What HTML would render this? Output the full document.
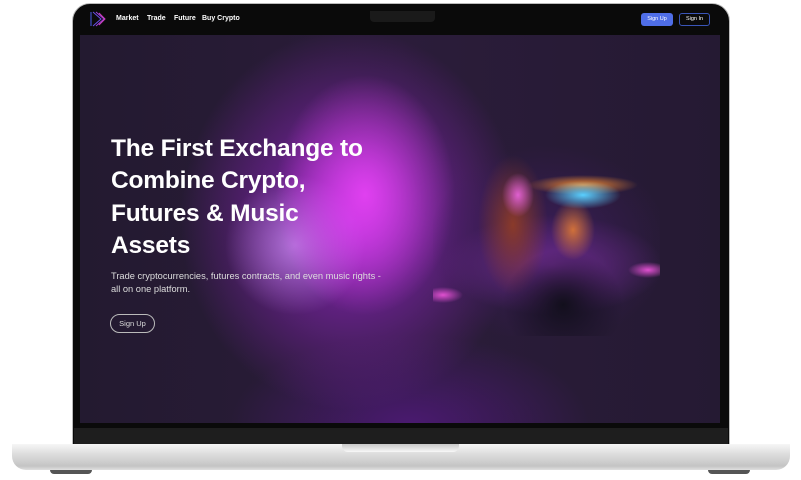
<!DOCTYPE html>
<html><head><style>
*{margin:0;padding:0;box-sizing:border-box}
body{width:801px;height:480px;background:#fff;position:relative;overflow:hidden;font-family:"Liberation Sans",sans-serif}
.frame{position:absolute;left:72px;top:3px;width:658px;height:442px;background:#0a0a0a;border-radius:18px 18px 0 0;border:1px solid #bbb}
.screen{position:absolute;left:80px;top:35px;width:640px;height:388px;overflow:hidden;
background:radial-gradient(ellipse 90px 120px at 285px 160px,#e040f0 0%,rgba(200,60,230,.0) 100%),
radial-gradient(ellipse 70px 70px at 215px 210px,rgba(200,140,240,.75) 0%,rgba(180,100,230,0) 100%),
radial-gradient(ellipse 170px 190px at 270px 185px,#a52ed0 0%,rgba(120,35,160,.7) 45%,rgba(40,25,55,0) 100%),
radial-gradient(ellipse 180px 90px at 330px 390px,#4a1a70 0%,rgba(40,25,55,0) 100%),
linear-gradient(90deg,#231a30,#2b1c3a 50%,#251a33);}
.nav{position:absolute;top:10px;left:80px;width:640px;height:20px;color:#fff;font-size:7px;font-weight:bold}
.nav span{position:absolute;top:5px}
.btn1{position:absolute;left:561px;top:3px;width:32px;height:13px;background:#4f6ee8;border-radius:3px;font-size:5.5px;text-align:center;line-height:13px;font-weight:normal}
.btn2{position:absolute;left:599px;top:3px;width:31px;height:13px;border:1px solid #3a55b8;border-radius:3px;font-size:5.5px;text-align:center;line-height:11px;font-weight:normal}
.cam{position:absolute;left:370px;top:11px;width:65px;height:11px;background:#1a1a1a;border-radius:0 0 4px 4px}
h1{position:absolute;left:31px;top:98px;color:#fff;font-size:24.5px;line-height:32.3px;font-weight:bold;width:262px;letter-spacing:-.2px}
p{position:absolute;left:31px;top:235px;color:#ddd;font-size:9.3px;line-height:13px;width:278px}
.su{position:absolute;left:30px;top:279px;width:45px;height:19px;border:1px solid #bbb;border-radius:10px;color:#ddd;font-size:7.5px;text-align:center;line-height:17px}
.art{position:absolute;left:353px;top:100px;width:227px;height:201px;background:
radial-gradient(ellipse 38px 14px at 150px 60px,#5ad0ff,rgba(0,0,0,0) 100%),
radial-gradient(ellipse 55px 10px at 150px 50px,#f08a30,rgba(0,0,0,0) 100%),
radial-gradient(ellipse 22px 30px at 140px 95px,#d0703a,rgba(0,0,0,0) 100%),
radial-gradient(ellipse 16px 22px at 85px 60px,#e060d0,rgba(0,0,0,0) 100%),
radial-gradient(ellipse 60px 55px at 130px 170px,#120f1c,rgba(0,0,0,0) 100%),
radial-gradient(ellipse 35px 70px at 80px 90px,#8a3a2a,rgba(0,0,0,0) 100%),
radial-gradient(ellipse 20px 8px at 215px 135px,#e050d0,rgba(0,0,0,0) 100%),
radial-gradient(ellipse 20px 8px at 10px 160px,#e050d0,rgba(0,0,0,0) 100%),
radial-gradient(ellipse 110px 50px at 120px 130px,#6a2a8a,rgba(0,0,0,0) 100%),
radial-gradient(ellipse 120px 100px at 115px 110px,#3a1c58,rgba(30,20,40,0) 100%);}
.base{position:absolute;left:74px;top:428px;width:654px;height:16px;background:#1e1e1e}
.silver{position:absolute;left:12px;top:444px;width:778px;height:26px;border-radius:0 0 14px 14px;background:linear-gradient(#f6f6f6,#dcdcdc 40%,#c4c4c4 85%,#e0e0e0)}
.notch{position:absolute;left:342px;top:444px;width:117px;height:8px;border-radius:0 0 6px 6px;background:linear-gradient(#c8c8c8,#f8f8f8)}
.foot{position:absolute;top:470px;width:42px;height:4px;background:#555;border-radius:0 0 4px 4px}
</style></head><body>
<div class="frame"></div>
<div class="screen">
<h1>The First Exchange to Combine Crypto, Futures &amp; Music Assets</h1>
<p>Trade cryptocurrencies, futures contracts, and even music rights - all on one platform.</p>
<div class="su">Sign Up</div>
<div class="art"></div>
</div>
<div class="cam"></div>
<div class="nav">
<svg style="position:absolute;left:9px;top:1px" width="18" height="16" viewBox="0 0 18 16"><g fill="none" stroke-width="1"><path d="M2 1v14" stroke="#4a5ee8"/><path d="M4 1l8 7-8 7" stroke="#6a4ee8"/><path d="M7 1l8 7-8 7" stroke="#a040d8"/><path d="M10 2l6 6-6 6" stroke="#d040c0"/></g></svg>
<span style="left:36px">Market</span><span style="left:67px">Trade</span><span style="left:94px">Future</span><span style="left:122px">Buy Crypto</span>
<div class="btn1">Sign Up</div><div class="btn2">Sign In</div>
</div>
<div class="base"></div>
<div class="silver"></div>
<div class="notch"></div>
<div class="foot" style="left:50px"></div><div class="foot" style="left:708px"></div>
</body></html>
